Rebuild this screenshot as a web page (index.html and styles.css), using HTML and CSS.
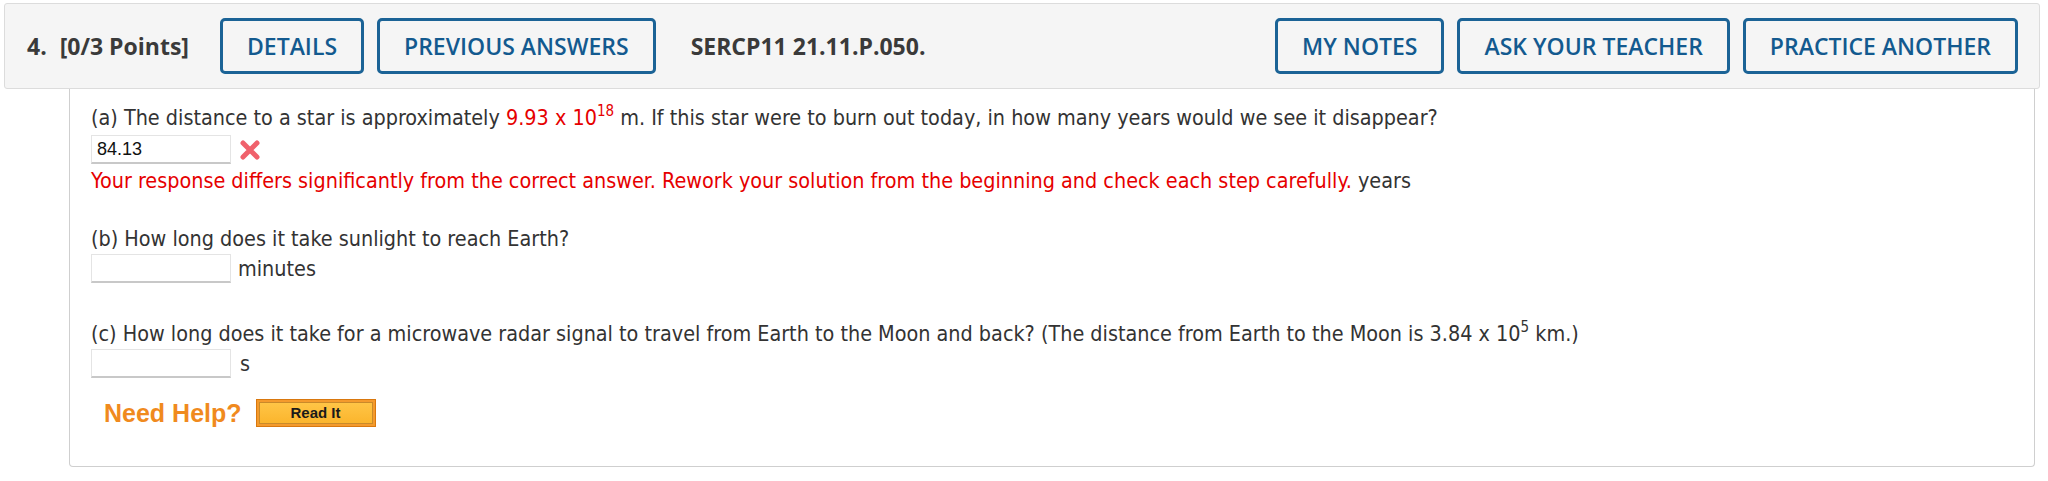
FILE: index.html
```html
<!DOCTYPE html>
<html lang="en">
<head>
    <meta charset="UTF-8">
    <meta name="viewport" content="width=device-width, initial-scale=1.0">
    <title>SERCP11 21.11.P.050.</title>

    <link rel="stylesheet" href="styles.css">
</head>
<body>

    <div class="question">
        <div class="qHeader">
            <span class="qNumber">4.</span>
            <span class="qPoints">[0/3 Points]</span>
            <div class="btnGroup leftBtns">
                <button class="qBtn" type="button">DETAILS</button>
                <button class="qBtn" type="button">PREVIOUS ANSWERS</button>
            </div>
            <span class="qCode">SERCP11 21.11.P.050.</span>
            <div class="btnGroup rightBtns">
                <button class="qBtn" type="button">MY NOTES</button>
                <button class="qBtn" type="button">ASK YOUR TEACHER</button>
                <button class="qBtn" type="button">PRACTICE ANOTHER</button>
            </div>
        </div>

        <div class="qBody">
            <!-- part a -->
            <div class="part partA">
                <p class="prompt">(a) The distance to a star is approximately <span class="given">9.93 x 10<sup>18</sup></span> m. If this star were to burn out today, in how many years would we see it disappear?</p>
                <div class="answerRow">
                    <input class="answerBox" type="text" value="84.13">
                    <svg class="wrongMark" width="22" height="22" viewBox="0 0 22 22">
                        <path d="M4 4 L18 18 M18 4 L4 18" stroke="#f0616b" stroke-width="5" stroke-linecap="round"/>
                    </svg>
                </div>
                <p class="feedback"><span class="wrongText">Your response differs significantly from the correct answer. Rework your solution from the beginning and check each step carefully.</span> years</p>
            </div>

            <!-- part b -->
            <div class="part partB">
                <p class="prompt">(b) How long does it take sunlight to reach Earth?</p>
                <div class="answerRow tight">
                    <input class="answerBox" type="text">
                    <span class="unit">minutes</span>
                </div>
            </div>

            <!-- part c -->
            <div class="part">
                <p class="prompt">(c) How long does it take for a microwave radar signal to travel from Earth to the Moon and back? (The distance from Earth to the Moon is 3.84 x 10<sup>5</sup> km.)</p>
                <div class="answerRow tight">
                    <input class="answerBox" type="text">
                    <span class="unit unitS">s</span>
                </div>
            </div>

            <div class="helpRow">
                <span class="needHelp">Need Help?</span>
                <button class="readIt" type="button"><span>Read It</span></button>
            </div>
        </div>
    </div>

</body>
</html>
```

FILE: styles.css
```css
body {
    margin: 0;
    background-color: #ffffff;
}

.question {
    padding: 3px 8px 0 4px;
}

/* Header bar with the question number and buttons */
.qHeader {
    display: flex;
    align-items: center;
    height: 84px;
    padding: 0 21px 0 22px;
    background-color: #f5f5f5;
    border: 1px solid #dcdcdc;
    border-radius: 3px;
    font-family: "Open Sans", "Liberation Sans", sans-serif;
    font-weight: 700;
    font-size: 23px;
    color: #3a3a3a;
    position: relative;
    z-index: 1;
}

.qPoints {
    margin-left: 13px;
}

.btnGroup {
    display: flex;
    gap: 13px;
}

.leftBtns {
    margin-left: 31px;
}

.rightBtns {
    margin-left: auto;
}

.qCode {
    margin-left: 35px;
}

.qBtn {
    height: 56px;
    padding: 0 24px;
    background-color: #f5f5f5;
    border: 3px solid #1b6396;
    border-radius: 5px;
    font-family: "Open Sans", "Liberation Sans", sans-serif;
    font-weight: 600;
    font-size: 23px;
    color: #135a8f;
    cursor: pointer;
}

/* Question body panel */
.qBody {
    margin: -1px 5px 0 65px;
    padding: 16px 21px 0 21px;
    height: 362px;
    border: 1px solid #cfcfcf;
    border-top: none;
    border-radius: 0 0 4px 4px;
    font-family: "DejaVu Sans Condensed", "DejaVu Sans", sans-serif;
    font-size: 21.4px;
    color: #333333;
}

.partA {
    margin-bottom: 30px;
}

.partB {
    margin-bottom: 37px;
}

.prompt {
    margin: 0;
    line-height: 28px;
}

.prompt sup {
    font-size: 15px;
    line-height: 0;
    vertical-align: 9px;
}

.given {
    color: #e60000;
}

.answerRow {
    display: flex;
    align-items: center;
    margin-top: 3px;
    height: 29px;
}

.answerRow.tight {
    margin-top: 1px;
}

.answerBox {
    width: 140px;
    height: 29px;
    box-sizing: border-box;
    margin: 0;
    padding: 2px 5px;
    border: 1px solid #e4e4e4;
    border-bottom: 2px solid #c8c8c8;
    font-family: "Liberation Sans", Arial, sans-serif;
    font-size: 18px;
    color: #111111;
}

.wrongMark {
    margin-left: 8px;
}

.unit {
    margin-left: 7px;
}

.unitS {
    margin-left: 9px;
}

.feedback {
    margin: 3px 0 0 0;
    line-height: 28px;
}

.wrongText {
    color: #e60000;
}

/* Need help row */
.helpRow {
    display: flex;
    align-items: center;
    height: 28px;
    margin-top: 21px;
    padding-left: 13px;
}

.needHelp {
    font-family: "Liberation Sans", Arial, sans-serif;
    font-weight: 700;
    font-size: 25px;
    color: #f08a1e;
}

.readIt {
    margin-left: 14px;
    width: 120px;
    height: 28px;
    padding: 2px;
    background-color: #f49a2c;
    border: 1px solid #d9780e;
    cursor: pointer;
}

.readIt span {
    display: block;
    height: 100%;
    box-sizing: border-box;
    background: linear-gradient(#ffc546, #fbb52d);
    border: 1px solid #c98a2a;
    font-family: "Liberation Sans", Arial, sans-serif;
    font-weight: 700;
    font-size: 15px;
    line-height: 20px;
    color: #1a1a1a;
}
```
